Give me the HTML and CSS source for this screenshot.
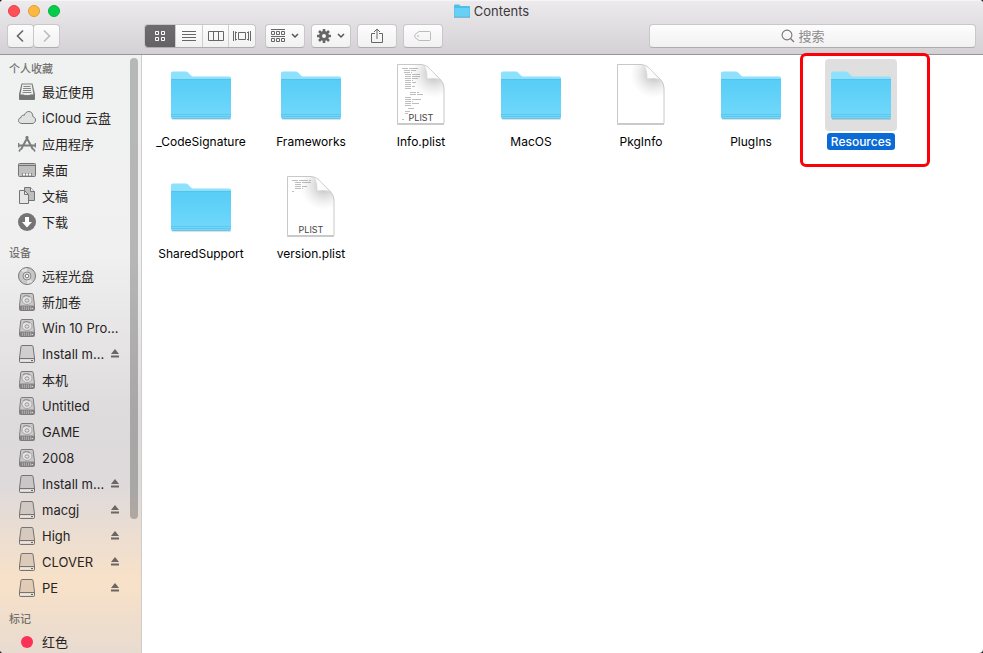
FILE: index.html
```html
<!DOCTYPE html>
<html lang="zh-CN">
<head>
<meta charset="utf-8">
<title>Contents</title>
<link rel="stylesheet" href="styles.css">
</head>
<body>
<svg class="defs" aria-hidden="true">
  <defs>
    <linearGradient id="folderFront" x1="0" y1="0" x2="0" y2="1"><stop offset="0" stop-color="#57cdf6"/><stop offset="1" stop-color="#72d8fb"/></linearGradient>
    <radialGradient id="curlShade" gradientUnits="userSpaceOnUse" cx="49" cy="15" r="24"><stop offset="0" stop-color="#999" stop-opacity=".7"/><stop offset=".4" stop-color="#aaa" stop-opacity=".4"/><stop offset="1" stop-color="#ccc" stop-opacity="0"/></radialGradient>
    <symbol id="folder" viewBox="0 0 72 72">
      <rect x="7" y="58" width="59" height="3" rx="1" fill="#000" opacity=".12"/>
      <path d="M6 19V14.500q0-2 2-2H21q1 0 2 1L26 16.500q1 1 2 1H64q2 0 2 2V30H6Z" fill="#8de1fc"/>
      <path d="M6 20H66V58q0 2-2 2H8q-2 0-2-2Z" fill="url(#folderFront)"/>
      <path d="M6 20.500H66" stroke="#4fc0ea" opacity=".7"/>
      <path d="M6 55.500H66M6 57.500H66M7 59.500H65" stroke="#5cc4ea" opacity=".8"/>
    </symbol>
    <symbol id="sheet" viewBox="0 0 72 72">
      <path d="M12.500 5.500H36Q41 5.500 45 10L55 20Q59 24 59 29V64.500H12.500Z" fill="#fff"/>
      <path d="M12.500 5.500H36Q41 5.500 45 10L55 20Q59 24 59 29V64.500H12.500Z" fill="url(#curlShade)" stroke="#c8c8c8"/>
      <path d="M38 6Q42 9 42 20Q50 19 55 20.500L45 10Q42 7 38 6Z" fill="#fcfcfc" stroke="#d4d4d4" stroke-width=".8"/>
      <path d="M12 65.500H59" stroke="#aaa" opacity=".6"/>
    </symbol>
    <symbol id="hdd" viewBox="0 0 18 18">
      <path d="M4 .5H14Q15 .5 15.200 1.500L16.500 12.500V16.500Q16.500 17.500 15.500 17.500H2.500Q1.500 17.500 1.500 16.500V12.500L2.800 1.500Q3 .5 4 .5Z" fill="#cbcaca" stroke="#7d7b7b"/>
      <path d="M2 12.500H16V17H2Z" fill="#858383"/>
      <path d="M4.500 13.500V17M6.500 13.500V17M8.500 13.500V17M10.500 13.500V17M12.500 13.500V17" stroke="#aaa8a8"/>
      <ellipse cx="9" cy="7" rx="5" ry="4.500" fill="#e6e5e5" stroke="#9a9898" stroke-width=".8"/>
      <ellipse cx="9" cy="7.500" rx="2" ry="1.700" fill="none" stroke="#8a8888" stroke-width=".9"/>
      <path d="M5 3.500Q8 1.500 12 4" fill="none" stroke="#8a8888" stroke-width=".9"/>
      <path d="M13.500 15.500H15" stroke="#ddd"/>
    </symbol>
    <symbol id="drive" viewBox="0 0 18 18">
      <path d="M4 .5H14Q14.800.5 15 1.500L16.500 13V16.500Q16.500 17.500 15.500 17.500H2.500Q1.500 17.500 1.500 16.500V13L3 1.500Q3.200.5 4 .5Z" fill="#000" fill-opacity=".09" stroke="#777372"/>
      <path d="M2 13.500H16" stroke="#777372"/><path d="M2 14.500H16V16.500H2Z" fill="#fff" opacity=".55"/><path d="M13 15.500H15" stroke="#666"/>
    </symbol>
    <symbol id="eject" viewBox="0 0 10 10"><path d="M5 0L9 5H1ZM1 6.500H9V8.500H1Z" fill="#6b6663"/></symbol>
  </defs>
</svg>
<div class="window">
  <header class="chrome">
    <div class="titlebar">
      <div class="lights">
        <button class="light close" aria-label="关闭"></button>
        <button class="light minimize" aria-label="最小化"></button>
        <button class="light expand" aria-label="全屏"></button>
      </div>
      <h1 class="title"><svg class="title-icon" viewBox="0 0 16 14"><path d="M0 2Q0 .5 1 .5H5L6.500 2H15Q16 2 16 3V13H0Z" fill="#4dbfe9"/><path d="M.5 4H15.500V12.500H.5Z" fill="#66d0f7"/><path d="M0 13.500H16" stroke="#8db4c2"/></svg>Contents</h1>
    </div>
    <div class="toolbar">
      <div class="nav">
        <button class="btn nav-btn" aria-label="后退"><svg width="24" height="22" viewBox="0 0 24 22"><path d="M15 5.500L9.500 11L15 16.500" fill="none" stroke="#666" stroke-width="1.600"/></svg></button>
        <button class="btn nav-btn" aria-label="前进"><svg width="24" height="22" viewBox="0 0 24 22"><path d="M10 5.500L15.500 11L10 16.500" fill="none" stroke="#bbb" stroke-width="1.600"/></svg></button>
      </div>
      <div class="btn views">
        <button class="seg active" aria-label="图标"><svg width="12" height="12" viewBox="0 0 12 12"><path d="M1.500 1.500h3v3h-3ZM7.500 1.500h3v3h-3ZM1.500 7.500h3v3h-3ZM7.500 7.500h3v3h-3Z" fill="none" stroke="#fff"/></svg></button>
        <button class="seg" aria-label="列表"><svg width="14" height="12" viewBox="0 0 14 12"><path d="M0 1.500H14M0 4.500H14M0 7.500H14M0 10.500H14" stroke="#666"/></svg></button>
        <button class="seg" aria-label="分栏"><svg width="16" height="12" viewBox="0 0 16 12"><path d="M.5 1.500H15.500V10.500H.5ZM5.500 1V11M10.500 1V11" fill="none" stroke="#666"/></svg></button>
        <button class="seg" aria-label="封面流"><svg width="18" height="12" viewBox="0 0 18 12"><path d="M5.500 2.500H12.500V9.500H5.500ZM.5 1V11M17.500 1V11M2.500 1.500V10.500M15.500 1.500V10.500M3 2.500H4M3 9.500H4M14 2.500H15M14 9.500H15" fill="none" stroke="#666"/></svg></button>
      </div>
      <button class="btn tool" aria-label="排列"><svg width="30" height="16" viewBox="0 0 30 16"><path d="M1 1.500H15M1 8.500H15M1.500 3.500h3v3h-3ZM6.500 3.500h3v3h-3ZM11.500 3.500h3v3h-3ZM1.500 10.500h3v3h-3ZM6.500 10.500h3v3h-3ZM11.500 10.500h3v3h-3Z" fill="none" stroke="#666"/><path d="M22 6L25 9L28 6" fill="none" stroke="#555" stroke-width="1.500"/></svg></button>
      <button class="btn tool" aria-label="操作"><svg width="30" height="16" viewBox="0 0 30 16"><circle cx="8" cy="8" r="3.500" fill="none" stroke="#666" stroke-width="3"/><path d="M8 1V4M8 12V15M1 8H4M12 8H15M3 3L5.200 5.200M10.800 10.800L13 13M13 3L10.800 5.200M5.200 10.800L3 13" stroke="#666" stroke-width="2.600"/><path d="M22 6L25 9L28 6" fill="none" stroke="#555" stroke-width="1.500"/></svg></button>
      <button class="btn tool" aria-label="共享"><svg width="12" height="16" viewBox="0 0 12 16"><path d="M4 5.500H.5V14.500H11.500V5.500H8M6 11V1M3 4L6 1L9 4" fill="none" stroke="#666"/></svg></button>
      <button class="btn tool" aria-label="标签"><svg width="18" height="12" viewBox="0 0 18 12"><path d="M5 1.500H15.500Q16.500 1.500 16.500 2.500V9.500Q16.500 10.500 15.500 10.500H5L1 7.500Q.5 6 1 4.500Z" fill="none" stroke="#bbb"/><circle cx="4" cy="6" r=".8" fill="#aaa"/></svg></button>
      <label class="btn search"><svg width="14" height="14" viewBox="0 0 14 14"><circle cx="6" cy="6" r="4.900" fill="none" stroke="#777" stroke-width="1.100"/><path d="M9.500 9.500L13 13" stroke="#777" stroke-width="1.300"/></svg><input class="search-input" type="text" placeholder="搜索" aria-label="搜索"></label>
    </div>
  </header>
  <div class="body">
    <nav class="sidebar">
      <h2 class="group">个人收藏</h2>
      <a class="item" href="#"><svg class="glyph" viewBox="0 0 18 18"><path d="M3.500 .5H14.500L17 11V16Q17 17 16 17H2Q1 17 1 16V11Z" fill="#7c7c7c"/><path d="M4.300 1.500H13.700L15.500 12H2.500Z" fill="#ededed"/><path d="M5.500 3.500H12.500M5 5.500H13M5 7.500H13M4.500 9.500H13.500" stroke="#888"/><path d="M1.500 11.500H6L7 13H11L12 11.500H16.500V16.500H1.500Z" fill="#747474"/></svg><span class="name">最近使用</span></a>
      <a class="item" href="#"><svg class="glyph" viewBox="0 0 18 18"><path d="M4 14.500C1.500 14.500.5 13 .5 11.500C.5 9.800 1.700 8.700 3 8.600C3 6.500 5 5.700 6.300 6.300C7 4 8.700 2.500 10.800 2.500C13.500 2.500 15 4.800 14.800 7.500C16.500 8 17.500 9.300 17.500 11C17.500 13 16 14.500 14 14.500Z" fill="#e0e1e1" stroke="#777"/></svg><span class="name">iCloud 云盘</span></a>
      <a class="item" href="#"><svg class="glyph" viewBox="0 0 18 18"><path d="M10 1.500L3 14.500M8 1.500L15 14.500" fill="none" stroke="#7c7c7c" stroke-width="2"/><path d="M0 10.500H18" stroke="#7c7c7c" stroke-width="2" stroke-dasharray="5 1 6 1 5"/><path d="M2.500 14L1 16.500M15.500 14L17 16.500M.5 8V12.500M17.500 8V12.500" stroke="#7c7c7c" stroke-width="1.500"/></svg><span class="name">应用程序</span></a>
      <a class="item" href="#"><svg class="glyph" viewBox="0 0 18 18"><rect x=".5" y="2.500" width="17" height="13" rx="1" fill="#bfbfbf" stroke="#747474"/><path d="M1 4.500H17" stroke="#747474"/><path d="M4 12H14V15H4Z" fill="#8c8c8c"/><path d="M5 13.500H7M8 13.500H10M11 13.500H13" stroke="#fff" stroke-width="2"/></svg><span class="name">桌面</span></a>
      <a class="item" href="#"><svg class="glyph" viewBox="0 0 18 18"><path d="M6.500 .5H12.500L16.500 4.500V13.500H6.500Z" fill="#bdbdbd" stroke="#747474"/><path d="M12.500 .5V4.500H16.500" fill="#eee" stroke="#747474"/><path d="M1.500 3.500H6.500L10.500 7.500V16.500H1.500Z" fill="#e6e6e6" stroke="#747474"/><path d="M6.500 3.500V7.500H10.500" fill="none" stroke="#747474"/></svg><span class="name">文稿</span></a>
      <a class="item" href="#"><svg class="glyph" viewBox="0 0 18 18"><circle cx="9" cy="9" r="9" fill="#747474"/><path d="M7 4H11V9H14L9 14.500L4 9H7Z" fill="#fff"/></svg><span class="name">下载</span></a>

      <h2 class="group">设备</h2>
      <a class="item" href="#"><svg class="glyph" viewBox="0 0 18 18"><circle cx="9" cy="9" r="8.500" fill="#c7c7c7" stroke="#777"/><path d="M9 9L3 3L9 .9ZM9 9L15 15L9 17.100Z" fill="#e2e2e2"/><circle cx="9" cy="9" r="4" fill="#ddd" stroke="#888"/><circle cx="9" cy="9" r="1.800" fill="#fff" stroke="#777"/></svg><span class="name">远程光盘</span></a>
      <a class="item" href="#"><svg class="glyph"><use href="#hdd"/></svg><span class="name">新加卷</span></a>
      <a class="item" href="#"><svg class="glyph"><use href="#hdd"/></svg><span class="name">Win 10 Pro...</span></a>
      <a class="item" href="#"><svg class="glyph"><use href="#drive"/></svg><span class="name">Install m...</span><svg class="eject"><use href="#eject"/></svg></a>
      <a class="item" href="#"><svg class="glyph"><use href="#hdd"/></svg><span class="name">本机</span></a>
      <a class="item" href="#"><svg class="glyph"><use href="#hdd"/></svg><span class="name">Untitled</span></a>
      <a class="item" href="#"><svg class="glyph"><use href="#hdd"/></svg><span class="name">GAME</span></a>
      <a class="item" href="#"><svg class="glyph"><use href="#hdd"/></svg><span class="name">2008</span></a>
      <a class="item" href="#"><svg class="glyph"><use href="#drive"/></svg><span class="name">Install m...</span><svg class="eject"><use href="#eject"/></svg></a>
      <a class="item" href="#"><svg class="glyph"><use href="#drive"/></svg><span class="name">macgj</span><svg class="eject"><use href="#eject"/></svg></a>
      <a class="item" href="#"><svg class="glyph"><use href="#drive"/></svg><span class="name">High</span><svg class="eject"><use href="#eject"/></svg></a>
      <a class="item" href="#"><svg class="glyph"><use href="#drive"/></svg><span class="name">CLOVER</span><svg class="eject"><use href="#eject"/></svg></a>
      <a class="item" href="#"><svg class="glyph"><use href="#drive"/></svg><span class="name">PE</span><svg class="eject"><use href="#eject"/></svg></a>

      <h2 class="group">标记</h2>
      <a class="item" href="#"><svg class="glyph" viewBox="0 0 18 18"><circle cx="9" cy="9" r="6" fill="#fc3158"/></svg><span class="name">红色</span></a>
      <div class="scrollbar"></div>
    </nav>
    <main class="files">
      <div class="file"><svg class="icon"><use href="#folder"/></svg><span class="label">_CodeSignature</span></div>
      <div class="file"><svg class="icon"><use href="#folder"/></svg><span class="label">Frameworks</span></div>
      <div class="file"><svg class="icon" viewBox="0 0 72 72"><use href="#sheet"/><path d="M17 9.500H33M19 11.500H31M19 13.500H27M20 15.500H35M20 17.500H35M20 19.500H33M20 21.500H28M20 23.500H31M20 25.500H27M20 27.500H30M20 29.500H26M25 33.500H34M25 35.500H38M20 38.500H27M20 40.500H36M20 42.500H28M20 44.500H34M20 46.500H26M23 49.500H30M20 52.500H25M20 54.500H23M17 60.500H19" stroke="#777" stroke-width=".8" stroke-dasharray="6 1 9 1" opacity=".6"/><text class="kind" x="36" y="62">PLIST</text></svg><span class="label">Info.plist</span></div>
      <div class="file"><svg class="icon"><use href="#folder"/></svg><span class="label">MacOS</span></div>
      <div class="file"><svg class="icon"><use href="#sheet"/></svg><span class="label">PkgInfo</span></div>
      <div class="file"><svg class="icon"><use href="#folder"/></svg><span class="label">PlugIns</span></div>
      <div class="file selected"><svg class="icon"><use href="#folder"/></svg><span class="label">Resources</span><div class="marker"></div></div>
      <div class="file"><svg class="icon"><use href="#folder"/></svg><span class="label">SharedSupport</span></div>
      <div class="file"><svg class="icon" viewBox="0 0 72 72"><use href="#sheet"/><path d="M17 9.500H36M20 11.500H36M20 13.500H27M20 15.500H32M20 17.500H28M17 20.500H19" stroke="#777" stroke-width=".8" stroke-dasharray="6 1 9 1" opacity=".6"/><text class="kind" x="36" y="62">PLIST</text></svg><span class="label">version.plist</span></div>
    </main>
  </div>
</div>
</body>
</html>
```
FILE: styles.css
```css
* { box-sizing: border-box; }
body {
  margin: 0;
  background: #222;
  font: 13px/20px Inter, "Noto Sans CJK SC", sans-serif;
  color: #222;
}
button { padding: 0; border: 0; background: none; }
svg { display: block; flex: none; }
.defs { position: absolute; width: 0; height: 0; }

.window {
  display: flex;
  flex-direction: column;
  height: 100vh;
  overflow: hidden;
  border-radius: 4px;
  background: #fff;
}

.chrome {
  flex: none;
  border-top: 1px solid #f6f5f6;
  border-bottom: 1px solid #979597;
  background: linear-gradient(#eceaec, #d3d1d3);
}
.titlebar {
  display: grid;
  grid-template-columns: 1fr auto 1fr;
  align-items: center;
  height: 20px;
  padding: 0 8px;
}
.lights { display: flex; gap: 8px; }
.light {
  width: 12px;
  height: 12px;
  border: 1px solid;
  border-radius: 50%;
}
.close { background: #ff5058; border-color: #e0434b; }
.minimize { background: #fdb93f; border-color: #df9d34; }
.expand { background: #05cc4b; border-color: #08b143; }
.title {
  display: flex;
  align-items: center;
  gap: 4px;
  margin: 0;
  font-size: 13px;
  font-weight: 400;
  color: #3c3a3c;
}
.title-icon { width: 16px; height: 14px; }

.toolbar {
  display: flex;
  gap: 6px;
  height: 33px;
  padding: 3px 7px 0;
}
.btn {
  height: 24px;
  border: 1px solid #c9c7c9;
  border-bottom-color: #aeacae;
  border-radius: 4px;
  background: linear-gradient(#fdfdfd, #f1f1f1);
}
.nav { display: flex; }
.nav-btn { width: 27px; }
.nav-btn + .nav-btn { margin-left: -1px; }
.views {
  display: flex;
  width: 112px;
  margin: 0 3px 0 78px;
  overflow: hidden;
}
.seg {
  display: flex;
  flex: 1;
  align-items: center;
  justify-content: center;
  border-left: 1px solid #cfcdcf;
}
.seg.active {
  flex: none;
  width: 31px;
  margin: -1px 0 -1px -1px;
  border: 0;
  background: linear-gradient(#6e6c6e, #646264);
}
.tool {
  display: flex;
  align-items: center;
  justify-content: center;
  width: 40px;
}
.search {
  display: flex;
  flex: 0 1 327px;
  align-items: center;
  justify-content: center;
  gap: 4px;
  margin-left: auto;
}
.search-input {
  width: 46px;
  height: 20px;
  padding: 0;
  border: 0;
  background: none;
  font: inherit;
}
.search-input::placeholder { color: #8c8a8c; opacity: 1; }

.body { display: flex; flex: 1; min-height: 0; }
.sidebar {
  position: relative;
  flex: none;
  width: 142px;
  overflow: hidden;
  border-right: 1px solid #cfcccb;
  background: linear-gradient(#f0f1f1 0, #f0f0f0 33%, #dedbdc 60%, #dedadb 72%, #f8e1c8 88%, #e8dbd0 100%);
}
.group {
  margin: 0;
  padding: 8px 0 0 9px;
  font-size: 11px;
  font-weight: 500;
  line-height: 20px;
  color: #737170;
}
.group:first-child { padding-top: 4px; }
.item {
  display: flex;
  align-items: center;
  gap: 6px;
  height: 26px;
  padding: 0 21px 0 18px;
  color: #262423;
  text-decoration: none;
}
.glyph { width: 18px; height: 18px; }
.name { flex: 1; white-space: nowrap; }
.eject { width: 10px; height: 10px; }
.scrollbar {
  position: absolute;
  top: 3px;
  right: 3px;
  width: 8px;
  height: 461px;
  border-radius: 4px;
  background: rgba(0, 0, 0, .24);
}

.files {
  display: grid;
  flex: 1;
  grid-template-columns: repeat(auto-fill, 110px);
  grid-auto-rows: 112px;
  align-content: start;
  padding: 4px 0 0 4px;
}
.file {
  position: relative;
  display: flex;
  flex-direction: column;
  align-items: center;
  gap: 2px;
  color: #000;
}
.icon { width: 72px; height: 72px; border-radius: 4px; }
.label {
  padding: 0 4px;
  border-radius: 3px;
  font-size: 12px;
  line-height: 17px;
}
.kind {
  font: 9px Inter, sans-serif;
  text-anchor: middle;
  fill: #444;
}
.selected .icon { background: #dfdfdf; }
.selected .label { background: #0a6ad6; color: #fff; font-weight: 500; }
.marker {
  position: absolute;
  top: -6px;
  left: -6px;
  width: 130px;
  height: 114px;
  border: 3px solid #fb0007;
  border-radius: 6px;
}
```
